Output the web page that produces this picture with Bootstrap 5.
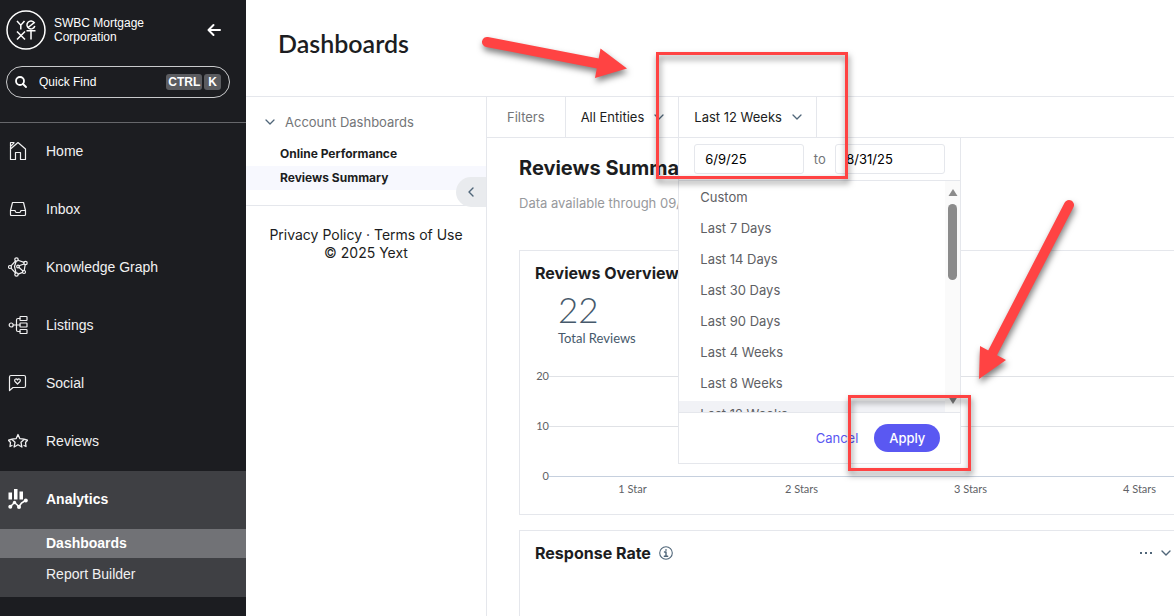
<!DOCTYPE html>
<html lang="en">
<head>
<meta charset="utf-8">
<meta name="viewport" content="width=device-width, initial-scale=1">
<title>Dashboards</title>
<link href="https://cdn.jsdelivr.net/npm/bootstrap@5.3.0/dist/css/bootstrap.min.css" rel="stylesheet">
<script src="https://cdn.jsdelivr.net/npm/bootstrap@5.3.0/dist/js/bootstrap.bundle.min.js"></script>
<style>
  :root { --line: #e5e7ec; --ink: #1c1d21; --slate: #506679; --grey: #737578; }
  body { font-family: Inter, "Liberation Sans", sans-serif; font-size: 13px; line-height: 18px; color: var(--ink); }
  a { text-decoration: none; color: inherit; }
  svg { display: block; flex: none; }
  .btn { font-size: 13px; line-height: 18px; }
  .icn { fill: none; stroke: currentColor; stroke-linecap: round; stroke-linejoin: round; }
  .slate { color: var(--slate); }
  .rule { border-color: var(--line) !important; }
  .grey { color: var(--grey); }

  /* dark sidebar */
  .side { flex: 0 0 246px; background: var(--ink); color: #fff; font-family: "Liberation Sans", Arial, sans-serif; }
  .side-top { border-bottom: 1px solid #66676b; height: 123px; padding: 10px 16px 0 6px; }
  .org { font-size: 12px; line-height: 14px; }
  .find { height: 32px; border: 1px solid #c9cacc; border-radius: 16px; padding: 0 8px; margin-top: 16px; }
  .find input { width: 0; background: none; border: 0; outline: 0; color: #fff; font-size: 12px; padding: 0; }
  .find input::placeholder { color: #fff; opacity: 1; }
  .find kbd { background: #5b5c60; color: #fff; font: bold 12px/16px "Liberation Sans", sans-serif; padding: 0 2px; border-radius: 3px; }
  .find kbd.wide { padding: 0 4px; margin-left: 2px; }
  .item { height: 58px; padding: 0 8px 2px; gap: 18px; font-size: 14px; color: #f1f1f2; }
  .group { background: #3f4044; padding-bottom: 8px; }
  .sub-item { height: 29px; line-height: 29px; padding-left: 46px; font-size: 14px; color: #f1f1f2; }
  .sub-item.active { background: #717276; color: #fff; font-weight: 700; }
  .sub-item + .sub-item { margin-top: 2px; }

  /* header and dashboard list */
  .head { flex: none; height: 97px; padding: 28px 32px; }
  .head h1 { font-family: Lato, sans-serif; font-size: 25px; line-height: 30px; font-weight: 600; margin: 0; }
  .tree { flex: 0 0 241px; }
  .tree-box { height: 109px; padding-top: 15px; }
  .tree-head { gap: 10px; padding: 0 19px; height: 20px; margin-bottom: 10px; }
  .tree-box a { display: block; height: 24px; line-height: 24px; padding-left: 34px; font-size: 12px; font-weight: 700; }
  .tree-box a.active { background: #f7f8fe; }
  .fold { right: 0; top: 80px; width: 30px; height: 30px; background: #e9ebee; border-radius: 15px 0 0 15px; }
  .legal { font-size: 14px; padding-top: 20px; }

  /* filters */
  .filters { height: 41px; }
  .filters > * { border-right: 1px solid var(--line); }
  .flt { color: var(--ink); padding: 0 14px 0 15px; gap: 10px; height: 40px; }
  .panel { top: 40px; left: -1px; width: 283px; z-index: 2; border: 1px solid var(--line); background: #fff; }
  .dates { height: 43px; padding: 0 15px; border-bottom: 1px solid var(--line); }
  .dates input { width: 110px; height: 30px; font-size: 13px; padding: 0 10px; border: 1px solid var(--line); border-radius: 3px; color: #000; }
  .choices { height: 231px; overflow: hidden; }
  .choices ul { padding: 3px 0 0; }
  .choices li { height: 27px; line-height: 27px; margin-bottom: 4px; padding-left: 21px; color: #5e6064; }
  .choices li.active { background: #f1f2f6; }
  .bar-y { width: 15px; background: #fafafa; padding: 8px 0; }
  .bar-y span { width: 9px; height: 76px; border-radius: 5px; background: #8b8b8b; margin-top: 8px; }
  .foot { height: 51px; padding-right: 20px; gap: 16px; border-top: 1px solid var(--line); }
  .foot .cancel { color: #5a58f2; }
  .foot .apply { height: 28px; width: 66px; border-radius: 14px; background: #5a58f2; color: #fff; font-weight: 500; }

  /* report */
  .report { padding: 18px 0 0 32px; }
  .report h2 { font-size: 20px; line-height: 24px; font-weight: 700; margin: 0 0 14px; }
  .note { color: #97999c; margin-bottom: 38px; }
  .tile { border: 1px solid var(--line); border-right: 0; padding: 12px 0 0 15px; }
  .tile h3 { font-size: 16px; line-height: 20px; font-weight: 700; margin: 0; }
  .overview { height: 265px; margin-bottom: 15px; }
  .total { font-family: Lato, sans-serif; color: #46596b; padding: 8px 0 0 23px; }
  .total b { display: block; font-size: 35px; line-height: 36px; font-weight: 300; }
  .total span { display: block; font-size: 13px; line-height: 22px; }
  .plot { margin-top: 19px; font-family: Lato, sans-serif; font-size: 11px; color: #606266; }
  .tick { height: 50px; }
  .tick span { width: 14px; text-align: right; line-height: 16px; margin-top: -8px; }
  .tick i { border-top: 1px solid #e0e2e6; }
  .tick.base { height: 5px; }
  .tick.base i { border-color: #c6d0de; }
  .cats { padding-left: 13px; }
  .cats span { flex: 0 0 169px; text-align: center; line-height: 16px; }
  .rate { height: 200px; }
  .tools { gap: 8px; padding-right: 3px; }
  .marks { left: 0; top: 0; z-index: 5; pointer-events: none; filter: drop-shadow(1px 4px 3px rgba(0,0,0,.5)); }
</style>
</head>
<body>
<div class="d-flex vh-100 overflow-hidden position-relative">
  <aside class="side">
    <div class="side-top">
      <div class="d-flex align-items-center pe-2">
        <svg width="40" height="40" viewBox="0 0 40 40" role="img" aria-label="Yext" fill="none" stroke="#fff" stroke-width="1.500">
          <circle cx="20" cy="20" r="19"/>
          <path d="m11 11 3.800 4.200L18.500 11M14.800 15v4.500M11 21.500l8 8M19 21.500l-8 8M20.500 20.800h9M25 20.800v8.700"/>
          <path d="M22 17.500l6.300-4.800A4 4 0 1 0 28.800 16"/>
        </svg>
        <div class="org ms-2">SWBC Mortgage<br>Corporation</div>
        <button class="btn p-0 border-0 ms-auto text-white" aria-label="Collapse menu">
          <svg class="icn" width="16" height="16" viewBox="0 0 16 16" stroke-width="2"><path d="M14 8H3M7.500 3 2.500 8l5 5"/></svg>
        </button>
      </div>
      <label class="find d-flex align-items-center">
        <svg class="icn" width="12" height="12" viewBox="0 0 12 12" stroke-width="1.800"><circle cx="5" cy="5" r="4"/><path d="m8 8 3 3"/></svg>
        <input class="flex-fill ms-2 ps-1" type="search" placeholder="Quick Find" aria-label="Quick Find">
        <kbd>CTRL</kbd><kbd class="wide">K</kbd>
      </label>
    </div>
    <nav>
      <a href="#" class="item d-flex align-items-center">
        <svg class="icn" width="20" height="20" viewBox="0 0 20 20" stroke-width="1.200"><path d="M2.500 18.500V8L10 1.500 17.500 8v10.500h-5v-7h-5v7zM2.500 8V1.500H6M2.500 5.500 6 1.800"/></svg>Home</a>
      <a href="#" class="item d-flex align-items-center">
        <svg class="icn" width="20" height="20" viewBox="0 0 20 20" stroke-width="1.200"><path d="M4.500 3.500h11l2 8v4q0 1-1 1h-13q-1 0-1-1v-4zM2.500 11.500H7q.5 2 1.500 2h3q1 0 1.500-2h4.500"/></svg>Inbox</a>
      <a href="#" class="item d-flex align-items-center">
        <svg class="icn" width="20" height="20" viewBox="0 0 20 20" stroke-width="1.200"><circle cx="8.500" cy="2.500" r="1.700"/><circle cx="17.500" cy="6" r="1.700"/><circle cx="2" cy="10" r="1.500"/><circle cx="8.500" cy="17.500" r="1.700"/><circle cx="16" cy="15" r="1.500"/><circle cx="10" cy="9.500" r="1.300"/><path d="m10 3.200 6 2.200M17.200 7.700 16.200 13.500M14.500 15.400l-4.300 1.700M7.500 16 3 11.200M3 8.900 7.500 4M11 8.800l5-1.800M8.200 4.200 6.500 9.500l1.500 6.200M11 10.500l4 3.500"/></svg>Knowledge Graph</a>
      <a href="#" class="item d-flex align-items-center">
        <svg class="icn" width="20" height="20" viewBox="0 0 20 20" stroke-width="1.200"><circle cx="3.200" cy="10" r="2"/><rect x="12" y="1.500" width="7" height="4" rx=".5"/><rect x="12" y="8" width="7" height="4" rx=".5"/><rect x="12" y="14.500" width="7" height="4" rx=".5"/><path d="M5.200 10H12M12 3.500H10Q8.500 3.500 8.500 5v10q0 1.500 1.500 1.500h2"/></svg>Listings</a>
      <a href="#" class="item d-flex align-items-center">
        <svg class="icn" width="20" height="20" viewBox="0 0 20 20" stroke-width="1.200"><path d="M1.500 17.500V4q0-1.500 1.500-1.500h13q1.500 0 1.500 1.500v9q0 1.500-1.500 1.500H5zM9.500 11 7 8.500q-1-2 .8-2.500 1-.2 1.700 1 .7-1.200 1.700-1 1.800.5.800 2.500z"/></svg>Social</a>
      <a href="#" class="item d-flex align-items-center">
        <svg class="icn" width="20" height="20" viewBox="0 0 20 20" stroke-width="1.300"><path d="m10 3.500 1.900 4.200 4.400.5-3.300 3.100.9 4.700-3.900-2.300L6.100 16l.9-4.700-3.300-3.100 4.400-.5zM3 8.500l-2.500.7 2 2.300-.5 4 2-1M17 8.500l2.500.7-2 2.300.5 4-2-1"/></svg>Reviews</a>
      <div class="group">
        <a href="#" class="item d-flex align-items-center fw-bold text-white">
          <svg width="20" height="20" viewBox="0 0 20 20" fill="#fff"><rect x=".5" y="3.500" width="3.500" height="7"/><rect x="6" y="0" width="3.500" height="10.500"/><rect x="11.500" y="2.500" width="3.500" height="8"/><path d="m2.500 17.500 4-4 4.500 4 2.500-3.500 4-2.500" fill="none" stroke="#fff" stroke-width="1.600"/><circle cx="2.300" cy="17.800" r="2"/><circle cx="6.500" cy="13.500" r="1.700"/><circle cx="11" cy="18" r="2"/><circle cx="17.800" cy="11.500" r="2"/></svg>Analytics</a>
        <a href="#" class="sub-item active d-block">Dashboards</a>
        <a href="#" class="sub-item d-block">Report Builder</a>
      </div>
    </nav>
  </aside>

  <main class="flex-fill d-flex flex-column overflow-hidden">
    <header class="head border-bottom rule"><h1>Dashboards</h1></header>
    <div class="d-flex flex-fill">
      <nav class="tree border-end rule position-relative">
        <div class="tree-box border-bottom rule">
          <button class="tree-head btn border-0 rounded-0 d-flex align-items-center grey">
            <svg class="icn slate" width="10" height="10" viewBox="0 0 10 10" stroke-width="1.300"><path d="m1 3 4 4 4-4"/></svg>
            <span>Account Dashboards</span>
          </button>
          <a href="#">Online Performance</a>
          <a href="#" class="active">Reviews Summary</a>
        </div>
        <button class="fold btn border-0 p-0 position-absolute d-flex align-items-center justify-content-center" aria-label="Collapse list">
          <svg class="icn slate" width="10" height="10" viewBox="0 0 10 10" stroke-width="1.400"><path d="M7 1 3 5l4 4"/></svg>
        </button>
        <div class="legal text-center"><a href="#">Privacy Policy</a> · <a href="#">Terms of Use</a><br>© 2025 Yext</div>
      </nav>

      <section class="flex-fill overflow-hidden">
        <div class="filters d-flex border-bottom rule">
          <div class="d-flex align-items-center px-3 grey"><span class="px-1">Filters</span></div>
          <button class="flt btn border-top-0 border-bottom-0 border-start-0 rounded-0 d-flex align-items-center rule">
            <span>All Entities</span>
            <svg class="icn slate" width="10" height="10" viewBox="0 0 10 10" stroke-width="1.300"><path d="m1 3 4 4 4-4"/></svg>
          </button>
          <div class="position-relative">
            <button class="flt btn border-0 rounded-0 d-flex align-items-center" aria-expanded="true">
              <span>Last 12 Weeks</span>
              <svg class="icn slate" width="10" height="10" viewBox="0 0 10 10" stroke-width="1.300"><path d="m1 3 4 4 4-4"/></svg>
            </button>
            <div class="panel position-absolute">
              <div class="dates d-flex align-items-center justify-content-between">
                <input type="text" value="6/9/25" aria-label="Start date">
                <span class="grey">to</span>
                <input type="text" value="8/31/25" aria-label="End date">
              </div>
              <div class="choices d-flex">
                <ul class="list-unstyled flex-fill m-0">
                  <li>Custom</li><li>Last 7 Days</li><li>Last 14 Days</li><li>Last 30 Days</li>
                  <li>Last 90 Days</li><li>Last 4 Weeks</li><li>Last 8 Weeks</li><li class="active">Last 12 Weeks</li>
                </ul>
                <div class="bar-y d-flex flex-column align-items-center">
                  <svg width="10" height="7" viewBox="0 0 10 7"><path d="M5 0 .5 7h9z" fill="#8b8b8b"/></svg>
                  <span></span>
                  <svg class="mt-auto" width="10" height="7" viewBox="0 0 10 7"><path d="M5 7 .5 0h9z" fill="#7b7b7b"/></svg>
                </div>
              </div>
              <div class="foot d-flex align-items-center justify-content-end">
                <button class="cancel btn border-0 p-0">Cancel</button>
                <button class="apply btn border-0 p-0">Apply</button>
              </div>
            </div>
          </div>
        </div>

        <div class="report">
          <h2>Reviews Summary</h2>
          <p class="note">Data available through 09/02/2025</p>
          <article class="tile overview">
            <h3>Reviews Overview</h3>
            <div class="total"><b>22</b><span>Total Reviews</span></div>
            <div class="plot overflow-hidden pt-2">
              <div class="tick d-flex"><span>20</span><i class="flex-fill"></i></div>
              <div class="tick d-flex"><span>10</span><i class="flex-fill"></i></div>
              <div class="tick base d-flex"><span>0</span><i class="flex-fill"></i></div>
              <div class="cats d-flex"><span>1 Star</span><span>2 Stars</span><span>3 Stars</span><span>4 Stars</span></div>
            </div>
          </article>
          <article class="tile rate">
            <div class="d-flex align-items-center">
              <h3>Response Rate</h3>
              <svg class="icn slate ms-2" width="14" height="14" viewBox="0 0 14 14" stroke-width="1.100"><circle cx="7" cy="7" r="6.300"/><path d="M5.500 6H7v4M5.300 10.300h3.400M7 3.600v.6" stroke-width="1.400"/></svg>
              <div class="tools ms-auto d-flex align-items-center">
                <button class="btn p-0 border-0" aria-label="More"><svg width="14" height="10" viewBox="0 0 14 10" fill="#506679"><rect x="1" y="4" width="2" height="2"/><rect x="6" y="4" width="2" height="2"/><rect x="11" y="4" width="2" height="2"/></svg></button>
                <button class="btn p-0 border-0" aria-label="Expand"><svg class="icn slate" width="10" height="10" viewBox="0 0 10 10" stroke-width="1.400"><path d="m1 3 4 4 4-4"/></svg></button>
              </div>
            </div>
          </article>
        </div>
      </section>
    </div>
  </main>

  <svg class="marks position-absolute" width="1174" height="616" viewBox="0 0 1174 616" fill="none" stroke="#ff4343" stroke-width="3" aria-hidden="true">
    <rect x="657.500" y="53.500" width="189" height="124"/>
    <rect x="849.500" y="396.500" width="120" height="73"/>
    <path d="m487 42 111 21.500M1069 205 992 354" stroke-width="10" stroke-linecap="round"/>
    <path d="m600.500 48.500 26.500 20-32 9.500zM980 346l26 14-27 19z" fill="#ff4343" stroke="none"/>
  </svg>
</div>
</body>
</html>
